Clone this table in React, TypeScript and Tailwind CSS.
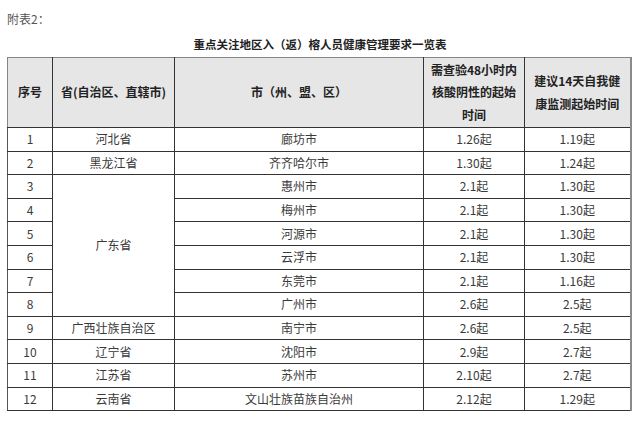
const rows: { no: number; prov?: string; span?: number; city: string; test: string; watch: string }[] = [
  { no: 1, prov: "河北省", city: "廊坊市", test: "1.26起", watch: "1.19起" },
  { no: 2, prov: "黑龙江省", city: "齐齐哈尔市", test: "1.30起", watch: "1.24起" },
  { no: 3, prov: "广东省", span: 6, city: "惠州市", test: "2.1起", watch: "1.30起" },
  { no: 4, city: "梅州市", test: "2.1起", watch: "1.30起" },
  { no: 5, city: "河源市", test: "2.1起", watch: "1.30起" },
  { no: 6, city: "云浮市", test: "2.1起", watch: "1.30起" },
  { no: 7, city: "东莞市", test: "2.1起", watch: "1.16起" },
  { no: 8, city: "广州市", test: "2.6起", watch: "2.5起" },
  { no: 9, prov: "广西壮族自治区", city: "南宁市", test: "2.6起", watch: "2.5起" },
  { no: 10, prov: "辽宁省", city: "沈阳市", test: "2.9起", watch: "2.7起" },
  { no: 11, prov: "江苏省", city: "苏州市", test: "2.10起", watch: "2.7起" },
  { no: 12, prov: "云南省", city: "文山壮族苗族自治州", test: "2.12起", watch: "1.29起" },
];

const th = "border border-[#333] border-t-[#858585] bg-[#e6e6e6] text-center align-middle text-[12px] font-bold text-[#222] leading-[22.5px]";
const td = "border border-[#333] text-center align-middle text-[12px] text-[#3a3a3a] leading-none";

export default function App() {
  return (
    <div className="h-[423px] w-[640px] bg-white px-[7px] pt-[13px] font-['Noto_Sans_CJK_SC','Liberation_Sans',sans-serif]">
      <div className="text-[12px] leading-[12px] text-[#555]">附表2：</div>
      <div className="mt-[13px] text-center text-[11.5px] font-bold leading-[12px] text-[#222]">
        重点关注地区入（返）榕人员健康管理要求一览表
      </div>
      <table className="mt-[7px] w-[623px] table-fixed border-collapse">
        <colgroup>
          <col className="w-[45px]" />
          <col className="w-[122px]" />
          <col className="w-[249px]" />
          <col className="w-[101px]" />
          <col className="w-[106px]" />
        </colgroup>
        <thead>
          <tr className="h-[70px]">
            <th className={`${th} border-l-[#858585]`}>序号</th>
            <th className={th}>省(自治区、直辖市)</th>
            <th className={th}>市（州、盟、区）</th>
            <th className={th}>
              需查验48小时内
              <br />
              核酸阴性的起始
              <br />
              时间
            </th>
            <th className={`${th} border-r-2 border-r-[#8a8a8a]`}>
              建议14天自我健
              <br />
              康监测起始时间
            </th>
          </tr>
        </thead>
        <tbody>
          {rows.map((r) => (
            <tr key={r.no} className="h-[23.6px]">
              <td className={`${td} border-l-[#555]`}>{r.no}</td>
              {r.prov !== undefined && (
                <td className={td} rowSpan={r.span ?? 1}>
                  {r.prov}
                </td>
              )}
              <td className={td}>{r.city}</td>
              <td className={td}>{r.test}</td>
              <td className={`${td} border-r-2 border-r-[#8a8a8a]`}>{r.watch}</td>
            </tr>
          ))}
        </tbody>
      </table>
    </div>
  );
}
